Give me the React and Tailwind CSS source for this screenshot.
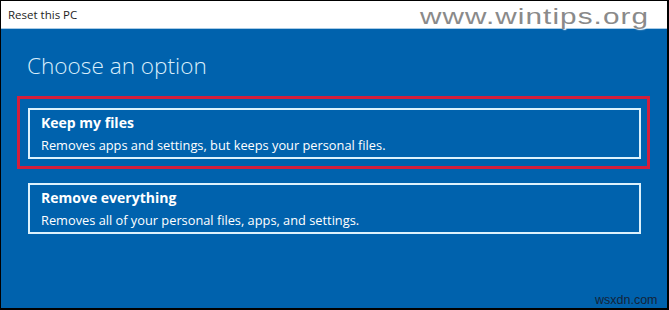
export default function App(){
  const sans = { fontFamily: '"Open Sans", "Noto Sans", sans-serif' }
  return (
    <div className="relative w-[669px] h-[310px] border-black border-l border-t border-r-2 border-b-2 flex flex-col bg-white" style={sans}>
      <div className="h-[28px] shrink-0 flex items-center pl-[7px] border-b border-[#a9cbe6] text-[11.5px] text-[#1e1e1e]">
        Reset this PC
      </div>
      <div className="flex-1 bg-[#0062ad] pl-[16px] pr-[17px] pt-[22px]">
        <h1 className="ml-[10px] text-[22.6px] leading-[30px] font-light text-[#d9eefb]">Choose an option</h1>
        <div className="mt-[15px] border-[3px] border-[#d41f3c] pt-[9px] pb-[7px] pl-[8px] pr-[6px]">
          <Option title="Keep my files" desc="Removes apps and settings, but keeps your personal files." />
        </div>
        <div className="mt-[14px] ml-[11px] mr-[9px]">
          <Option title="Remove everything" desc="Removes all of your personal files, apps, and settings." />
        </div>
      </div>

      {/* watermarks over the screenshot */}
      <span
        className="absolute top-[5px] left-[419px] origin-left scale-x-[1.35] text-[22px] leading-[22px] tracking-[0.8px] text-[#8a8a8a] [text-shadow:0_0_1px_#ffffff,1px_1px_1px_#ffffff]"
        style={{ fontFamily: '"Liberation Sans", Arial, sans-serif' }}
      >
        www.wintips.org
      </span>
      <span
        className="absolute top-[292px] left-[594px] text-[12.5px] leading-[14px] text-[#13243a]"
        style={{ fontFamily: '"Liberation Sans", Arial, sans-serif' }}
      >
        wsxdn.com
      </span>
    </div>
  )
}

function Option({ title, desc }){
  return (
    <div className="border-2 border-[#dcf1fc] pl-[11px] pt-[2px] pb-[1px] text-white">
      <div className="text-[14px] leading-[22px] font-bold">{title}</div>
      <div className="text-[12.8px] leading-[22px]">{desc}</div>
    </div>
  )
}
